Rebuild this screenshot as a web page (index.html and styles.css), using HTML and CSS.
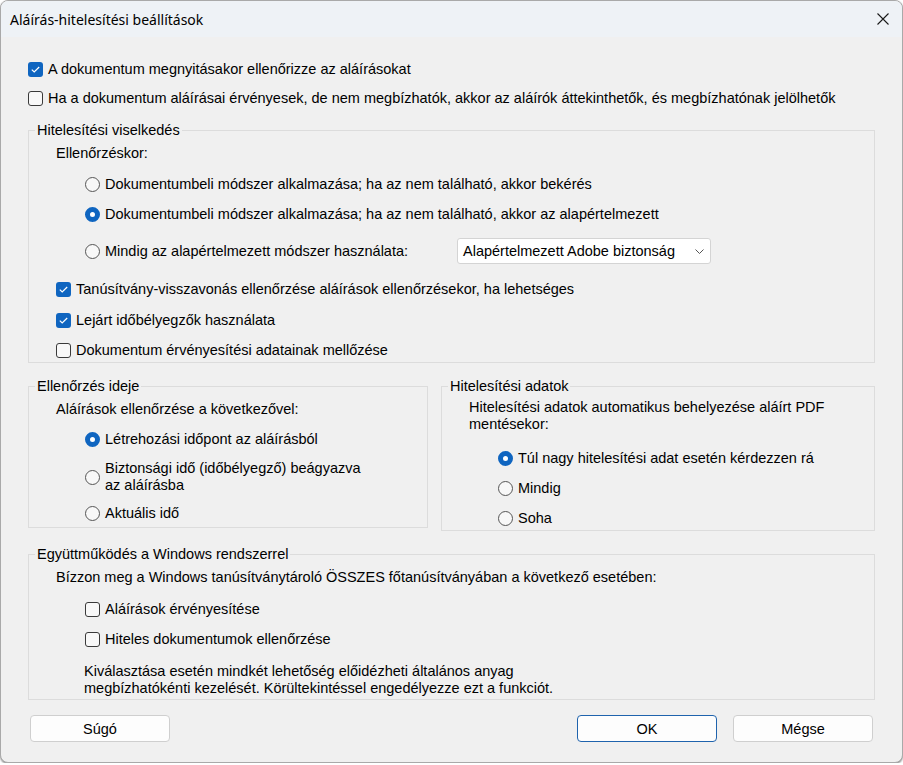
FILE: index.html
```html
<!DOCTYPE html>
<html lang="hu">
<head>
<meta charset="utf-8">
<title>Aláírás-hitelesítési beállítások</title>
<link rel="stylesheet" href="styles.css">
</head>
<body>
<div class="window">
  <header class="titlebar">
    <span class="title">Aláírás-hitelesítési beállítások</span>
    <span class="close" aria-label="Bezárás">
      <svg width="12" height="12" viewBox="0 0 12 12"><path d="M0.5 0.5 L11.5 11.5 M11.5 0.5 L0.5 11.5" stroke="#1a1a1a" stroke-width="1.1" fill="none"/></svg>
    </span>
  </header>
  <main class="content">
    <div class="row">
      <span class="cb checked"><svg viewBox="0 0 15 15"><path d="M3.8 7.6 L6.2 10 L11.2 5" stroke="#fff" stroke-width="1.2" fill="none"/></svg></span>A dokumentum megnyitásakor ellenőrizze az aláírásokat
    </div>
    <div class="row mt9">
      <span class="cb"></span>Ha a dokumentum aláírásai érvényesek, de nem megbízhatók, akkor az aláírók áttekinthetők, és megbízhatónak jelölhetők
    </div>

    <fieldset class="group first">
      <legend>Hitelesítési viselkedés</legend>
      <div class="group-body pb2">
        <div class="row">Ellenőrzéskor:</div>
        <div class="row indent mt11"><span class="rb"></span>Dokumentumbeli módszer alkalmazása; ha az nem található, akkor bekérés</div>
        <div class="row indent mt10"><span class="rb on"></span>Dokumentumbeli módszer alkalmazása; ha az nem található, akkor az alapértelmezett</div>
        <div class="row tall indent mt14">
          <span class="method-label"><span class="rb"></span>Mindig az alapértelmezett módszer használata:</span>
          <span class="select">Alapértelmezett Adobe biztonság<svg width="9" height="5" viewBox="0 0 9 5"><path d="M0.5 0.5 L4.5 4.5 L8.5 0.5" stroke="#555" stroke-width="1" fill="none"/></svg></span>
        </div>
        <div class="row mt15"><span class="cb checked"><svg viewBox="0 0 15 15"><path d="M3.8 7.6 L6.2 10 L11.2 5" stroke="#fff" stroke-width="1.2" fill="none"/></svg></span>Tanúsítvány-visszavonás ellenőrzése aláírások ellenőrzésekor, ha lehetséges</div>
        <div class="row mt11"><span class="cb checked"><svg viewBox="0 0 15 15"><path d="M3.8 7.6 L6.2 10 L11.2 5" stroke="#fff" stroke-width="1.2" fill="none"/></svg></span>Lejárt időbélyegzők használata</div>
        <div class="row mt10"><span class="cb"></span>Dokumentum érvényesítési adatainak mellőzése</div>
      </div>
    </fieldset>

    <div class="pair">
      <fieldset class="group time">
        <legend>Ellenőrzés ideje</legend>
        <div class="group-body pb4">
          <div class="row">Aláírások ellenőrzése a következővel:</div>
          <div class="row indent mt10"><span class="rb on"></span>Létrehozási időpont az aláírásból</div>
          <div class="row two indent mt11"><span class="rb"></span><span>Biztonsági idő (időbélyegző) beágyazva<br>az aláírásba</span></div>
          <div class="row indent mt9"><span class="rb"></span>Aktuális idő</div>
        </div>
      </fieldset>
      <fieldset class="group data">
        <legend>Hitelesítési adatok</legend>
        <div class="group-body pb2">
          <div class="para">Hitelesítési adatok automatikus behelyezése aláírt PDF<br>mentésekor:</div>
          <div class="row indent mt15"><span class="rb on"></span>Túl nagy hitelesítési adat esetén kérdezzen rá</div>
          <div class="row indent mt10"><span class="rb"></span>Mindig</div>
          <div class="row indent mt10"><span class="rb"></span>Soha</div>
        </div>
      </fieldset>
    </div>

    <fieldset class="group windows">
      <legend>Együttműködés a Windows rendszerrel</legend>
      <div class="group-body pb2">
        <div class="row">Bízzon meg a Windows tanúsítványtároló ÖSSZES főtanúsítványában a következő esetében:</div>
        <div class="row indent mt12"><span class="cb"></span>Aláírások érvényesítése</div>
        <div class="row indent mt10"><span class="cb"></span>Hiteles dokumentumok ellenőrzése</div>
        <div class="para note mt14">Kiválasztása esetén mindkét lehetőség előidézheti általános anyag<br>megbízhatókénti kezelését. Körültekintéssel engedélyezze ezt a funkciót.</div>
      </div>
    </fieldset>

    <footer class="buttons">
      <button class="btn">Súgó</button>
      <span class="spacer"></span>
      <button class="btn default">OK</button>
      <button class="btn">Mégse</button>
    </footer>
  </main>
</div>
</body>
</html>
```

FILE: styles.css
```css
html, body {
  margin: 0;
  background: #ffffff;
}

body {
  font-family: "Liberation Sans", Arial, sans-serif;
  font-size: 14.5px;
  color: #000;
}

.window {
  box-sizing: border-box;
  width: 903px;
  height: 763px;
  border: 1px solid #a9a9a9;
  border-radius: 8px;
  background: #f0f0f0;
  overflow: hidden;
  box-shadow: 0 1px 2px rgba(0, 0, 0, 0.45);
}

.titlebar {
  height: 36px;
  background: #eef2f6;
  display: flex;
  align-items: center;
  justify-content: space-between;
  padding-left: 9px;
}

.title {
  font-family: "Noto Sans", "Open Sans", sans-serif;
  font-size: 14px;
  color: #000;
}

.close {
  display: flex;
  margin-right: 13px;
}

.content {
  padding: 22px 27px 0;
}

.row {
  display: flex;
  align-items: center;
  height: 20px;
  white-space: nowrap;
}

.row.tall { height: 26px; }
.row.two { height: 34px; line-height: 17px; }

.para { line-height: 17px; }

.indent { margin-left: 29px; }
.note { margin-left: 28px; }

.mt9 { margin-top: 9px; }
.mt10 { margin-top: 10px; }
.mt11 { margin-top: 11px; }
.mt12 { margin-top: 12px; }
.mt14 { margin-top: 14px; }
.mt15 { margin-top: 15px; }

.cb {
  box-sizing: border-box;
  flex: none;
  width: 15px;
  height: 15px;
  margin-right: 5px;
  border: 1px solid #3a3a3a;
  border-radius: 3px;
  background: #f8f8f8;
  display: flex;
}

.cb svg { width: 100%; height: 100%; }

.cb.checked {
  border: none;
  background: #0f65c0;
}

.rb {
  box-sizing: border-box;
  flex: none;
  width: 15px;
  height: 15px;
  margin-right: 5px;
  border: 1px solid #555;
  border-radius: 50%;
  background: #f8f8f8;
}

.rb.on {
  border: 5px solid #0f65c0;
  background: #fff;
}

.method-label {
  display: flex;
  align-items: center;
  width: 372px;
}

.select {
  box-sizing: border-box;
  width: 254px;
  height: 26px;
  border: 1px solid #d4d4d4;
  border-radius: 3px;
  background: #fff;
  display: flex;
  align-items: center;
  justify-content: space-between;
  padding: 0 5px 0 5px;
}

.select svg { margin-right: 1px; }

.group {
  margin: 14px 0 0;
  padding: 0;
  border: 1px solid #dcdcdc;
  min-width: 0;
}

.group legend {
  padding: 0 2px;
  margin-left: 6px;
  line-height: 16px;
}

.group-body {
  padding: 5px 0 0 27px;
}

.pb2 { padding-bottom: 2px; }
.pb4 { padding-bottom: 4px; }

.pair {
  display: flex;
  align-items: flex-start;
  gap: 13px;
  margin-top: 15px;
}

.pair .group { margin-top: 0; }

.group.time { width: 400px; box-sizing: border-box; }
.group.data { flex: 1; }

.group.windows { margin-top: 15px; }

.buttons {
  display: flex;
  gap: 16px;
  margin-top: 15px;
  padding: 0 2px;
}

.spacer { flex: 1; }

.btn {
  box-sizing: border-box;
  width: 140px;
  height: 27px;
  border: 1px solid #cfcfcf;
  border-radius: 4px;
  background: #fdfdfd;
  font-family: "Liberation Sans", Arial, sans-serif;
  font-size: 14.5px;
  color: #000;
  padding: 0;
}

.btn.default {
  border-color: #1f63ad;
}
```
